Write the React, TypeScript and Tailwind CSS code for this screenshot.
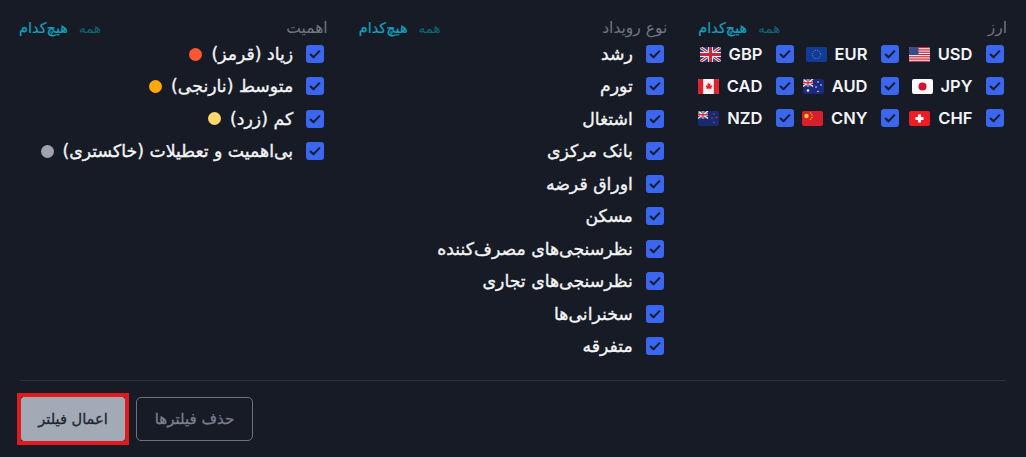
import React from "react";

const Check = () => (
  <span className="flex h-[18px] w-[18px] shrink-0 items-center justify-center rounded-[3px] bg-[#3a66f0]">
    <svg viewBox="0 0 16 16" className="h-[14px] w-[14px]" fill="none" stroke="#161b26" strokeWidth="2.2" strokeLinecap="round" strokeLinejoin="round">
      <path d="M3 8.5l3.3 3.2L13 4.8" />
    </svg>
  </span>
);

const Frame = ({ children }: { children: React.ReactNode }) => (
  <svg viewBox="0 0 21 15" className="h-[15px] w-[21px] shrink-0 rounded-[2px]">{children}</svg>
);

const UK = () => (
  <>
    <rect width="21" height="15" fill="#2a3f80" />
    <path d="M0 0l21 15M21 0L0 15" stroke="#eee" strokeWidth="3" />
    <path d="M0 0l21 15M21 0L0 15" stroke="#c8283c" strokeWidth="1.2" />
    <path d="M10.5 0v15M0 7.5h21" stroke="#eee" strokeWidth="5" />
    <path d="M10.5 0v15M0 7.5h21" stroke="#c8283c" strokeWidth="3.2" />
  </>
);

const MiniUK = () => (
  <g>
    <rect width="10" height="7.5" fill="#2a3f80" />
    <path d="M0 0l10 7.5M10 0L0 7.5" stroke="#eee" strokeWidth="1.4" />
    <path d="M5 0v7.5M0 3.75h10" stroke="#eee" strokeWidth="2.4" />
    <path d="M5 0v7.5M0 3.75h10" stroke="#d03045" strokeWidth="1.3" />
  </g>
);

const flags: Record<string, React.ReactNode> = {
  USD: (
    <>
      <rect width="21" height="15" fill="#f2f2f2" />
      {[0, 2.3, 4.6, 6.9, 9.2, 11.5, 13.8].map((y) => (
        <rect key={y} y={y} width="21" height="1.2" fill="#c8283c" />
      ))}
      <rect width="9.5" height="8" fill="#3c4a8c" />
    </>
  ),
  EUR: (
    <>
      <rect width="21" height="15" fill="#103a9c" />
      <circle cx="10.5" cy="7.5" r="4.2" fill="none" stroke="#e8c53a" strokeWidth="0.7" strokeDasharray="0.8 1.4" />
    </>
  ),
  GBP: <UK />,
  JPY: (
    <>
      <rect width="21" height="15" fill="#fafafa" />
      <circle cx="10.5" cy="7.5" r="4" fill="#d3132f" />
    </>
  ),
  AUD: (
    <>
      <rect width="21" height="15" fill="#1a2a80" />
      <MiniUK />
      <circle cx="5" cy="11.5" r="1.3" fill="#eee" />
      <circle cx="15" cy="3" r="0.8" fill="#eee" />
      <circle cx="18" cy="6" r="0.8" fill="#eee" />
      <circle cx="13" cy="8" r="0.8" fill="#eee" />
      <circle cx="15" cy="12.5" r="0.8" fill="#eee" />
    </>
  ),
  CAD: (
    <>
      <rect width="21" height="15" fill="#f4f4f4" />
      <rect width="5.2" height="15" fill="#e0202c" />
      <rect x="15.8" width="5.2" height="15" fill="#e0202c" />
      <path d="M10.5 3l1 2 1.2-.5-.4 2.6 1.5-.8.4 1-1 1.6.5 1-2.5-.3v1.6h-.4v-1.6l-2.5.3.5-1-1-1.6.4-1 1.5.8-.4-2.6 1.2.5z" fill="#e0202c" />
    </>
  ),
  CHF: (
    <>
      <rect width="21" height="15" fill="#ee1c25" />
      <rect x="9" y="3.5" width="3" height="8" fill="#fff" />
      <rect x="6.5" y="6" width="8" height="3" fill="#fff" />
    </>
  ),
  CNY: (
    <>
      <rect width="21" height="15" fill="#d8202c" />
      <circle cx="4.5" cy="5" r="2.2" fill="#f5d020" />
      <circle cx="8.5" cy="2" r="0.7" fill="#f5d020" />
      <circle cx="10" cy="4" r="0.7" fill="#f5d020" />
      <circle cx="10" cy="6.5" r="0.7" fill="#f5d020" />
      <circle cx="8.5" cy="8.3" r="0.7" fill="#f5d020" />
    </>
  ),
  NZD: (
    <>
      <rect width="21" height="15" fill="#1a2a70" />
      <MiniUK />
      <circle cx="16" cy="3" r="0.8" fill="#d0404f" />
      <circle cx="18.5" cy="6.5" r="0.8" fill="#d0404f" />
      <circle cx="14" cy="7" r="0.8" fill="#d0404f" />
      <circle cx="16" cy="11.5" r="0.8" fill="#d0404f" />
    </>
  ),
};

const currencies = ["USD", "EUR", "GBP", "JPY", "AUD", "CAD", "CHF", "CNY", "NZD"];
const events = ["رشد", "تورم", "اشتغال", "بانک مرکزی", "اوراق قرضه", "مسکن", "نظرسنجی‌های مصرف‌کننده", "نظرسنجی‌های تجاری", "سخنرانی‌ها", "متفرقه"];
const levels = [
  ["زیاد (قرمز)", "bg-[#ff5733]"],
  ["متوسط (نارنجی)", "bg-[#ffa90a]"],
  ["کم (زرد)", "bg-[#ffd76a]"],
  ["بی‌اهمیت و تعطیلات (خاکستری)", "bg-[#9ca3af]"],
];

const Header = ({ title }: { title: string }) => (
  <div className="flex h-[19px] items-center justify-between leading-[19px]">
    <span className="text-[15.5px] text-[#6f7682]">{title}</span>
    <span className="flex items-center gap-[11px] text-[14.5px]">
      <span className="text-[13.5px] text-[#0f6477]">همه</span>
      <span className="text-[#14a0c0] [-webkit-text-stroke:0.2px_#14a0c0]">هیچ‌کدام</span>
    </span>
  </div>
);

const Persian = ({ children }: { children: React.ReactNode }) => (
  <span className="text-[17.3px] leading-5 text-[#f4f5f7] [-webkit-text-stroke:0.35px_#f4f5f7]">{children}</span>
);

export default function App() {
  return (
    <div dir="rtl" className="flex h-[457px] w-[1026px] flex-col bg-[#171b25] px-[19px] pt-[19px] font-['DejaVu_Sans',sans-serif]">
      <div className="grid h-[342px] grid-cols-3 gap-x-[31px]">
        <section>
          <Header title="ارز" />
          <div className="grid grid-cols-[105px_105px_95px] gap-y-[11px] pr-[3.5px] pt-[5.5px]">
            {currencies.map((c) => (
              <div key={c} className="flex h-[21px] items-center gap-[13px]">
                <Check />
                <span className="flex items-center gap-2">
                  <span dir="ltr" className="font-['Inter',sans-serif] text-[16.5px] font-semibold text-[#f4f5f7]">{c}</span>
                  <Frame>{flags[c]}</Frame>
                </span>
              </div>
            ))}
          </div>
        </section>
        <section>
          <Header title="نوع رویداد" />
          <div className="flex flex-col gap-[12.45px] pr-[3.5px] pt-[6px]">
            {events.map((e) => (
              <div key={e} className="flex h-5 items-center gap-[13px]">
                <Check />
                <Persian>{e}</Persian>
              </div>
            ))}
          </div>
        </section>
        <section>
          <Header title="اهمیت" />
          <div className="flex flex-col gap-[12.45px] pr-[3.5px] pt-[6px]">
            {levels.map(([l, dot]) => (
              <div key={l} className="flex h-5 items-center gap-[13px]">
                <Check />
                <Persian>{l}</Persian>
                <span className={`-mr-[4px] h-[13px] w-[13px] rounded-full ${dot}`} />
              </div>
            ))}
          </div>
        </section>
      </div>
      <div dir="ltr" className="mx-px mt-[19px] flex items-start justify-start gap-[7px] border-t border-[#2b303b] pt-[12px]">
        <div className="-ml-[3px] border-[4px] border-[#e01b1f]">
          <button className="block h-[44px] w-[104px] rounded-[3px] bg-[#a2aab6] text-[14.6px] text-[#1f2430] [-webkit-text-stroke:0.3px_#1f2430]">اعمال فیلتر</button>
        </div>
        <button className="mt-[4px] h-[44px] w-[117px] rounded-[5px] border border-[#6b7280] text-[15px] text-[#7a808c] [-webkit-text-stroke:0.3px_#7a808c]">حذف فیلترها</button>
      </div>
    </div>
  );
}
